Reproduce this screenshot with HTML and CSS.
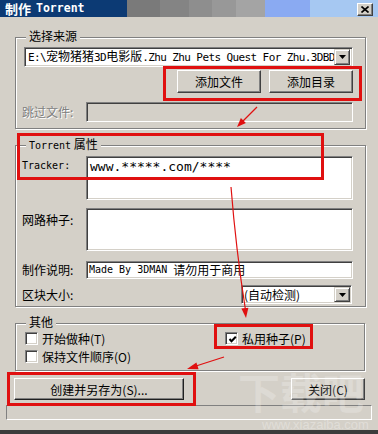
FILE: index.html
```html
<!DOCTYPE html>
<html>
<head>
<meta charset="utf-8">
<link rel="stylesheet" href="styles.css">
</head>
<body>
<div class="window">
  <div class="titlebar">
    <span class="title"><span class="t-cjk">制作</span><span class="t-lat">Torrent</span></span>
    <span class="close"><svg width="8" height="7" viewBox="0 0 8 7"><path d="M0.5 0.5 L7.5 6.5 M7.5 0.5 L0.5 6.5" stroke="#000" stroke-width="1.6" fill="none"/></svg></span>
  </div>
  <div class="client">
    <div class="group g1">
      <span class="gtitle">选择来源</span>
      <div class="combo src">
        <span class="combo-text mono">E:\<span class="cjk">宠物猪猪</span>3D<span class="cjk">电影版</span>.Zhu Zhu Pets Quest For Zhu.3DBD</span>
        <span class="drop"><svg width="7" height="4" viewBox="0 0 7 4"><path d="M0 0 H7 L3.5 4 Z" fill="#000"/></svg></span>
      </div>
      <div class="btnrow">
        <div class="btn add">添加文件</div>
        <div class="btn add">添加目录</div>
      </div>
      <div class="row skip">
        <span class="label disabled">跳过文件:</span>
        <div class="field off"></div>
      </div>
    </div>

    <div class="group g2">
      <span class="gtitle"><span class="mono gt-lat">Torrent</span> 属性</span>
      <div class="row r-tracker">
        <span class="label mono lab-lat">Tracker:</span>
        <div class="field area tracker mono">www.*****.com/****</div>
      </div>
      <div class="row r-web">
        <span class="label lab-web">网路种子:</span>
        <div class="field area web"></div>
      </div>
      <div class="row r-desc">
        <span class="label">制作说明:</span>
        <div class="field desc"><span class="mono desc-lat">Made By 3DMAN </span><span class="cjk">请勿用于商用</span></div>
      </div>
      <div class="row r-block">
        <span class="label">区块大小:</span>
        <div class="combo block">
          <span class="combo-text">(自动检测)</span>
          <span class="drop"><svg width="7" height="4" viewBox="0 0 7 4"><path d="M0 0 H7 L3.5 4 Z" fill="#000"/></svg></span>
        </div>
      </div>
    </div>

    <div class="group g3">
      <span class="gtitle">其他</span>
      <div class="opts">
        <div class="optcol left">
          <div class="chk"><span class="box"></span><span class="ctext">开始做种(T)</span></div>
          <div class="chk"><span class="box"></span><span class="ctext">保持文件顺序(O)</span></div>
        </div>
        <div class="optcol right">
          <div class="chk"><span class="box"><svg width="9" height="9" viewBox="0 0 9 9"><path d="M1.5 4 L3.5 6.2 L7.8 1.8" stroke="#000" stroke-width="2" fill="none"/></svg></span><span class="ctext">私用种子(P)</span></div>
        </div>
      </div>
    </div>

    <div class="actions">
      <div class="btn create">创建并另存为(S)...</div>
      <div class="btn closebtn">关闭(C)</div>
    </div>

    <div class="status"></div>
  </div>
</div>

<div class="watermark">下载吧</div>
<div class="watermark-url">www.xiazaiba.com</div>

<svg class="annot" width="378" height="434" viewBox="0 0 378 434">
  <g fill="none" stroke="#e01010" stroke-width="3">
    <rect x="164.5" y="67.5" width="196" height="32"/>
    <rect x="18.5" y="134.5" width="304" height="44"/>
    <rect x="215.5" y="325.5" width="96" height="22"/>
    <rect x="8.5" y="373.5" width="186" height="31"/>
  </g>
  <g stroke="#e01010" stroke-width="1.2" fill="none">
    <path d="M257 107 L242 122"/>
    <path d="M231 187 Q236 250 245.5 310"/>
    <path d="M224 357 L196 366"/>
  </g>
  <g fill="#e01010">
    <polygon points="237,127 245.9,123.1 240.9,118.1"/>
    <polygon points="246,318 248.4,307.7 241.4,308.5"/>
    <polygon points="187,369 198.6,369.2 196.4,362.5"/>
  </g>
</svg>
</body>
</html>
```
FILE: styles.css
```css
* { box-sizing: border-box; }
html, body { margin: 0; padding: 0; }
body {
  width: 378px;
  height: 434px;
  overflow: hidden;
  position: relative;
  background: #d4d0c8;
  font-family: "Noto Sans CJK SC", sans-serif;
  font-size: 12px;
  color: #000;
}
.mono { font-family: "DejaVu Sans Mono", "Noto Sans CJK SC", monospace; }
.cjk { font-family: "Noto Sans CJK SC", sans-serif; font-size: 12px; letter-spacing: 0; }

.window {
  height: 434px;
  display: flex;
  flex-direction: column;
  border-bottom: 4px solid #3c3c3c;
}

/* title bar */
.titlebar {
  height: 17px;
  flex: none;
  display: flex;
  align-items: center;
  justify-content: space-between;
  padding: 0 5px 0 5px;
  background: linear-gradient(to right,
    #0c3a74 0 127px,
    #7a7a7a 127px 160px,
    #848484 160px 189px,
    #8e8e8e 189px 212px,
    #989898 212px 236px,
    #a4a4a4 236px 265px,
    #8aaaf2 265px 310px,
    #a6c8f2 310px);
  color: #fff;
}
.title { display: flex; align-items: center; gap: 5px; font-weight: bold; line-height: 17px; }
.t-cjk { font-size: 13px; font-weight: bold; }
.t-lat { font-family: "DejaVu Sans Mono", monospace; font-size: 11.5px; font-weight: bold; }
.close {
  width: 16px;
  height: 13px;
  background: #d4d0c8;
  border: 1px solid;
  border-color: #fff #404040 #404040 #fff;
  box-shadow: inset -1px -1px #808080;
  display: flex;
  align-items: center;
  justify-content: center;
  margin-top: 1px;
}
.close svg { display: block; }

.client { flex: 1; display: flex; flex-direction: column; }

/* group boxes */
.group {
  position: relative;
  border: 1px solid #808080;
  box-shadow: inset 1px 1px #fff, 1px 1px #fff;
  margin: 0 12px 0 15px;
  flex: none;
}
.gtitle {
  position: absolute;
  top: -9px;
  left: 10px;
  padding: 0 3px;
  background: #d4d0c8;
  line-height: 14px;
  white-space: nowrap;
}
.gt-lat { font-size: 10px; }

.g1 { margin-top: 20px; height: 92px; padding: 9px 12px 6px 6px; display: flex; flex-direction: column; }
.g2 { margin-top: 16px; height: 162px; padding: 10px 12px 2px 6px; display: flex; flex-direction: column; }
.g3 { margin-top: 16px; margin-right: 13px; height: 48px; padding: 8px 12px 7px 9px; }

/* sunken fields */
.field, .combo {
  border: 1px solid;
  border-color: #808080 #fff #fff #808080;
  box-shadow: inset 1px 1px #404040, inset -1px -1px #d4d0c8;
  background: #fff;
}
.field.off { background: #d4d0c8; }

.combo {
  display: flex;
  align-items: center;
  padding: 1px 2px 1px 2px;
  overflow: hidden;
}
.combo-text {
  flex: 1;
  min-width: 0;
  white-space: nowrap;
  overflow: hidden;
  line-height: 16px;
  padding-left: 1px;
}
.src { margin-left: 2px; height: 20px; }
.src .combo-text { font-size: 11px; letter-spacing: -0.6px; }
.drop {
  flex: none;
  width: 16px;
  height: 16px;
  background: #d4d0c8;
  border: 1px solid;
  border-color: #d4d0c8 #404040 #404040 #d4d0c8;
  box-shadow: inset 1px 1px #fff, inset -1px -1px #808080;
  display: flex;
  align-items: center;
  justify-content: center;
}
.drop svg { display: block; }

/* buttons */
.btn {
  background: #d4d0c8;
  border: 1px solid;
  border-color: #fff #404040 #404040 #fff;
  box-shadow: inset -1px -1px #808080;
  display: flex;
  align-items: center;
  justify-content: center;
  white-space: nowrap;
}
.btnrow { margin-top: 3px; display: flex; justify-content: flex-end; gap: 8px; }
.add { width: 84px; height: 23px; }

/* label rows */
.row { display: flex; align-items: center; }
.label { width: 64px; flex: none; white-space: nowrap; line-height: 14px; }
.label.disabled { color: #808080; text-shadow: 1px 1px 0 #fff; }
.row .field { flex: 1; }
.skip { margin-top: 9px; height: 20px; }
.skip .field { height: 20px; }

.r-tracker { height: 44px; align-items: flex-start; }
.lab-lat { font-size: 10px; margin-top: 3px; }
.tracker { height: 44px; font-size: 13px; line-height: 16px; padding: 2px 3px; white-space: nowrap; }
.r-web { margin-top: 8px; height: 43px; align-items: flex-start; }
.lab-web { margin-top: 5px; }
.web { height: 43px; }
.r-desc { margin-top: 10px; height: 18px; }
.desc { height: 18px; display: flex; align-items: center; padding-left: 2px; white-space: nowrap; line-height: 14px; }
.desc-lat { font-size: 10px; white-space: pre; }
.r-block { margin-top: 6px; height: 19px; justify-content: space-between; }
.block { width: 111px; height: 19px; margin-right: 1px; padding: 1px 1px 1px 1px; }
.block .drop { height: 15px; }

/* check boxes */
.opts { display: flex; }
.optcol { display: flex; flex-direction: column; gap: 5px; }
.optcol.left { width: 200px; }
.chk { display: flex; align-items: center; height: 13px; gap: 4px; }
.box {
  width: 13px;
  height: 13px;
  flex: none;
  background: #fff;
  border: 1px solid;
  border-color: #808080 #fff #fff #808080;
  box-shadow: inset 1px 1px #404040, inset -1px -1px #d4d0c8;
  display: flex;
  align-items: center;
  justify-content: center;
}
.box svg { display: block; margin: 1px 0 0 1px; }
.ctext { line-height: 13px; white-space: nowrap; }

/* bottom */
.actions { margin: 7px 13px 0 14px; display: flex; justify-content: space-between; flex: none; }
.create { width: 170px; height: 22px; border-color: #fff #202020 #202020 #fff; }
.closebtn { width: 74px; height: 22px; }
.status {
  margin: 5px 6px 0 6px;
  height: 15px;
  flex: none;
  border: 1px solid;
  border-color: #808080 #fff #fff #808080;
}

/* overlays */
.watermark {
  position: absolute;
  left: 238px;
  top: 366px;
  font-size: 42px;
  font-weight: bold;
  line-height: 50px;
  color: rgba(255, 255, 255, 0.22);
  letter-spacing: 0;
}
.watermark-url {
  position: absolute;
  left: 262px;
  top: 418px;
  font-family: "Liberation Sans", sans-serif;
  font-size: 13px;
  line-height: 13px;
  color: rgba(255, 255, 255, 0.3);
}
.annot { position: absolute; left: 0; top: 0; pointer-events: none; }
```
